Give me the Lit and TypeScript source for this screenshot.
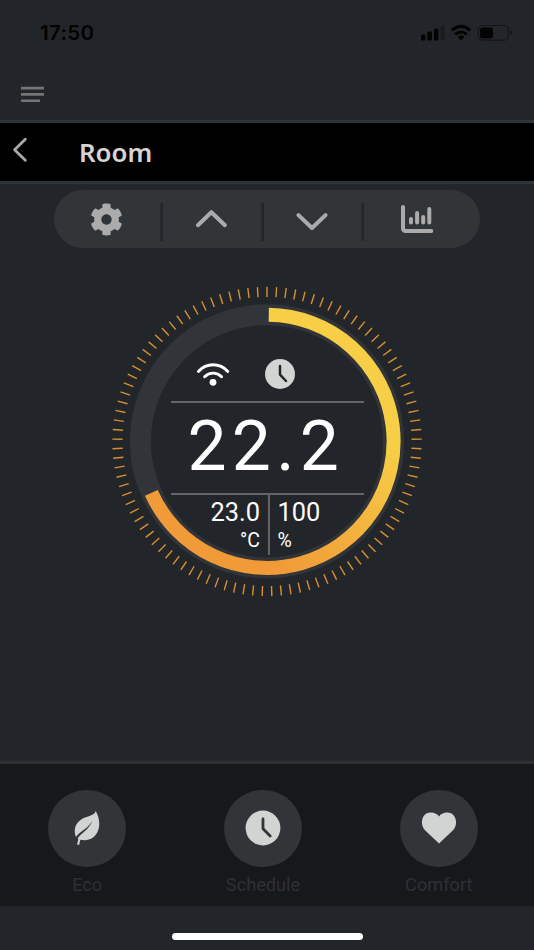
import { LitElement, html, svg, css } from "lit";
import { customElement } from "lit/decorators.js";

const TICKS = 101;

const gear = svg`<path fill="currentColor" d="M487.4 315.7l-42.6-24.6c4.3-23.2 4.3-47 0-70.2l42.6-24.6c4.9-2.8 7.1-8.6 5.5-14-11.1-35.6-30-67.8-54.7-94.6-3.8-4.1-10-5.1-14.8-2.3L380.8 110c-17.9-15.4-38.5-27.3-60.8-35.1V25.8c0-5.6-3.9-10.5-9.4-11.7-36.7-8.2-74.3-7.8-109.2 0-5.5 1.2-9.4 6.1-9.4 11.7V75c-22.2 7.9-42.8 19.8-60.8 35.1L88.7 85.5c-4.9-2.8-11-1.9-14.8 2.3-24.7 26.7-43.6 58.9-54.7 94.6-1.7 5.4.6 11.2 5.5 14L67.3 221c-4.3 23.2-4.3 47 0 70.2l-42.6 24.6c-4.9 2.8-7.1 8.6-5.5 14 11.1 35.6 30 67.8 54.7 94.6 3.8 4.1 10 5.1 14.8 2.3l42.6-24.6c17.9 15.4 38.5 27.3 60.8 35.1v49.2c0 5.6 3.9 10.5 9.4 11.7 36.7 8.2 74.3 7.8 109.2 0 5.5-1.2 9.4-6.1 9.4-11.7v-49.2c22.2-7.9 42.8-19.8 60.8-35.1l42.6 24.6c4.9 2.8 11 1.9 14.8-2.3 24.7-26.7 43.6-58.9 54.7-94.6 1.5-5.5-.7-11.3-5.6-14.1zM256 336c-44.1 0-80-35.9-80-80s35.9-80 80-80 80 35.9 80 80-35.9 80-80 80z"/>`;

@customElement("dial-gauge")
export class DialGauge extends LitElement {
  static styles = css`
    :host { display: grid; width: 310px; height: 310px; color: #fff; }
    .ring, .face { grid-area: 1 / 1; }
    .ring { display: block; overflow: visible; }
    .face {
      display: flex; flex-direction: column; width: 193px; margin: 63px 0 0 58.5px;
      font-family: Roboto, sans-serif;
    }
    .status { display: flex; height: 52px; border-bottom: 2px solid #626466; box-sizing: content-box; }
    .wifi { width: 34px; height: 26px; margin: 12px 0 0 25.5px; }
    .clock { width: 30px; height: 30px; margin: 10px 0 0 34.8px; }
    .value {
      height: 89.5px; line-height: 88px; font-size: 69.5px; letter-spacing: 5.3px;
      padding-left: 17px; white-space: nowrap;
    }
    .readings { display: grid; grid-template-columns: 99px 1fr; border-top: 2px solid #626466; height: 58px; }
    .cell { display: flex; flex-direction: column; padding: 4px 8px 0; font-size: 25.4px; line-height: 27px; }
    .left { align-items: flex-end; padding-right: 7.5px; border-right: 2px solid #626466; }
    .unit { font-size: 19.5px; line-height: 29px; }
  `;

  render() {
    const ticks = Array.from({ length: TICKS }, (_, i) =>
      svg`<line x1="155" y1="0.3" x2="155" y2="10.5" transform="rotate(${(i * 360) / TICKS} 155 155)"/>`);
    const point = (deg: number) => {
      const a = (deg * Math.PI) / 180;
      return `${155 + 126.6 * Math.sin(a)} ${154.8 - 126.6 * Math.cos(a)}`;
    };
    return html`
      <svg class="ring" width="310" height="310" viewBox="0 -0.5 310 310">
        <defs>
          <linearGradient id="heat" gradientUnits="userSpaceOnUse" x1="273" y1="154" x2="178" y2="284">
            <stop offset="0" stop-color="#f7ce46"/>
            <stop offset="1" stop-color="#f19b38"/>
          </linearGradient>
        </defs>
        <g stroke="#d8902f" stroke-width="1.4">${ticks}</g>
        <circle cx="155" cy="154.8" r="126.6" fill="none" stroke="#313439" stroke-width="21"/>
        <path d="M${point(0.8)} A126.6 126.6 0 1 1 ${point(246)}" fill="none" stroke="url(#heat)" stroke-width="14"/>
      </svg>
      <div class="face">
        <div class="status">
          <svg class="wifi" viewBox="0 0 34 26" fill="none" stroke="#fff" stroke-width="2.9" stroke-linecap="round">
            <path d="M2.4 10.4C10.5 1.6 23.7 1.6 31.8 10.4M8.6 15.8C13.6 10.9 20.6 10.9 25.6 15.8"/>
            <circle cx="17" cy="21.3" r="3.4" fill="#fff" stroke="none"/>
          </svg>
          <svg class="clock" viewBox="0 0 30 30">
            <circle cx="15" cy="15" r="15" fill="#d2d4d3"/>
            <path d="M15 7V15.6L21 22" fill="none" stroke="#222529" stroke-width="2.5" stroke-linecap="round" stroke-linejoin="round"/>
          </svg>
        </div>
        <div class="value">22.2</div>
        <div class="readings">
          <div class="cell left"><span>23.0</span><span class="unit">°C</span></div>
          <div class="cell"><span>100</span><span class="unit">%</span></div>
        </div>
      </div>`;
  }
}

@customElement("app-root")
export class AppRoot extends LitElement {
  static styles = css`
    :host {
      display: flex; flex-direction: column; height: 950px; overflow: hidden;
      background: #222529; font-family: Roboto, sans-serif;
    }
    svg { display: block; }
    .statusbar {
      display: flex; justify-content: space-between; align-items: center;
      height: 65px; padding: 0 21px 0 40px; box-sizing: border-box; color: #030303;
    }
    .time { font: 600 20.5px/24px Inter, sans-serif; letter-spacing: .3px; }
    .menu { height: 55px; padding: 21px 0 0 21px; box-sizing: border-box; }
    .title {
      display: flex; align-items: center; height: 64px; box-sizing: border-box;
      background: #000; border: solid #303436; border-width: 3px 0;
    }
    .back { margin: -5px 0 0 12px; }
    .title h1 {
      margin: 0 0 0 51px; color: #d4d4d4;
      font: 600 25.8px/30px "Noto Sans", sans-serif;
    }
    .tools {
      display: grid; grid-template-columns: 106px 98.5px 98px 1fr; column-gap: 2.5px;
      width: 426px; height: 58px; margin: 6px 0 0 54px; border-radius: 29px;
      background: #313538; color: #ababab; align-items: center;
    }
    .tool {
      display: flex; align-items: center; justify-content: center; height: 38.5px;
      margin-top: 6px; padding: 0 1px 6px 0; box-sizing: border-box;
    }
    .tool + .tool { box-shadow: -2.5px 0 #222529; }
    .tools .last { padding-right: 11px; }
    .stage { flex: 1; display: flex; padding: 38px 0 0 112px; }
    .modes {
      display: flex; justify-content: center; gap: 75.8px; height: 145px; box-sizing: border-box;
      padding-top: 25.5px; padding-right: 8px; background: #17181c; border-top: 3px solid #2e3033;
    }
    .mode {
      display: flex; flex-direction: column; align-items: center; width: 100px; gap: 4.5px;
      color: #2e3034; font-size: 18.2px; line-height: 25px;
    }
    .disc { display: flex; align-items: center; justify-content: center; width: 77.5px; height: 77.5px; border-radius: 50%; background: #313538; }
    .home { display: flex; justify-content: center; height: 44px; }
    .home i { width: 191px; height: 7px; margin-top: 27px; border-radius: 4px; background: #fff; }
  `;

  render() {
    return html`
      <div class="statusbar">
        <span class="time">17:50</span>
        <svg width="93" height="20" viewBox="0 0 93 20" fill="currentColor">
          <rect x="1" y="11.5" width="4.4" height="6" rx="1.2"/>
          <rect x="7.3" y="8.5" width="4.6" height="9" rx="1.2"/>
          <rect x="14" y="5.7" width="4.4" height="11.8" rx="1.2"/>
          <rect x="20.4" y="2.7" width="4.5" height="14.8" rx="1.2" fill="#1a1c20"/>
          <path d="M41 17.2L37.7 13.9Q41 11.2 44.3 13.9Z"/>
          <path d="M35.2 11.4Q41 6.5 46.8 11.4M31.8 7.4Q41-.8 50.2 7.4" fill="none" stroke="currentColor" stroke-width="3"/>
          <rect x="58.4" y="2.5" width="30" height="14.6" rx="4" fill="none" stroke="#141618" stroke-width="1.2"/>
          <rect x="60" y="4.5" width="13" height="10.8" rx="2.4"/>
          <path d="M90 7.2Q92 8 92 9.8T90 12.4Z" fill="#141618"/>
        </svg>
      </div>
      <div class="menu">
        <svg width="24" height="17" viewBox="0 0 24 17" fill="#757575">
          <path d="M0 .8H23V3.4H0ZM0 7.1H23V9.7H0ZM0 13.5H19V16.1H0Z"/>
        </svg>
      </div>
      <div class="title">
        <svg class="back" width="16" height="26" viewBox="0 0 16 26" fill="none" stroke="#a9a9a9" stroke-width="2.8" stroke-linecap="round" stroke-linejoin="round">
          <path d="M13.3 2.2L2.6 12.8L13.3 23.2"/>
        </svg>
        <h1>Room</h1>
      </div>
      <div class="tools">
        <div class="tool"><svg width="33" height="33" viewBox="0 0 512 512">${gear}</svg></div>
        <div class="tool">
          <svg width="34" height="22" viewBox="0 0 34 22" fill="none" stroke="currentColor" stroke-width="4" stroke-linecap="round" stroke-linejoin="round"><path d="M3.9 17.2L17.4 4.2L30.9 17.2"/></svg>
        </div>
        <div class="tool">
          <svg width="34" height="22" viewBox="0 0 34 22" fill="none" stroke="currentColor" stroke-width="4" stroke-linecap="round" stroke-linejoin="round"><path d="M3.5 7.5L17 20.4L30.5 7.5" transform="translate(0 -.4)"/></svg>
        </div>
        <div class="tool last">
          <svg width="34" height="30" viewBox="0 0 34 30" fill="none" stroke="currentColor" stroke-width="4" stroke-linecap="round">
            <path d="M3 3V24Q3 27 6 27H31.3M11 15V18.6M17.1 9V18.6M23.2 13V18.6M29.3 5V18.6"/>
          </svg>
        </div>
      </div>
      <div class="stage"><dial-gauge></dial-gauge></div>
      <div class="modes">
        <div class="mode">
          <div class="disc">
            <svg width="26" height="36" viewBox="0 0 26 36">
              <path d="M21.7 1C20.5 6 13 5.7 7.5 9.2C1.5 13.2 -.6 19.4 1.6 26.3L4.2 29C7.5 30.3 14 31.4 19.3 27.2C26.5 21.6 27 10 21.7 1Z" fill="#d2d4d3"/>
              <path d="M18.4 10.5C14 19 5.9 20.9 1.5 27.6L3.2 29.2C6.6 23 14.8 20.6 18.4 10.5Z" fill="#313538"/>
              <path d="M6.5 27.4Q4.4 30.5 4.2 34.8" fill="none" stroke="#d2d4d3" stroke-width="2.2"/>
            </svg>
          </div>
          <span>Eco</span>
        </div>
        <div class="mode">
          <div class="disc">
            <svg width="36" height="36" viewBox="0 0 36 36">
              <circle cx="18" cy="18" r="17.4" fill="#d2d4d3"/>
              <path d="M18 9V18.7L25.2 26" fill="none" stroke="#313538" stroke-width="2.8" stroke-linecap="round" stroke-linejoin="round"/>
            </svg>
          </div>
          <span>Schedule</span>
        </div>
        <div class="mode">
          <div class="disc">
            <svg width="36" height="32" viewBox="0 0 36 32">
              <path d="M18 31.5L4 18.3C-1.5 12.8 .3 .6 9.8 .6C13.6 .6 16.5 2.4 18 4.4C19.5 2.4 22.4 .6 26.2 .6C35.7 .6 37.5 12.8 32 18.3Z" fill="#d2d4d3"/>
            </svg>
          </div>
          <span>Comfort</span>
        </div>
      </div>
      <div class="home"><i></i></div>`;
  }
}
